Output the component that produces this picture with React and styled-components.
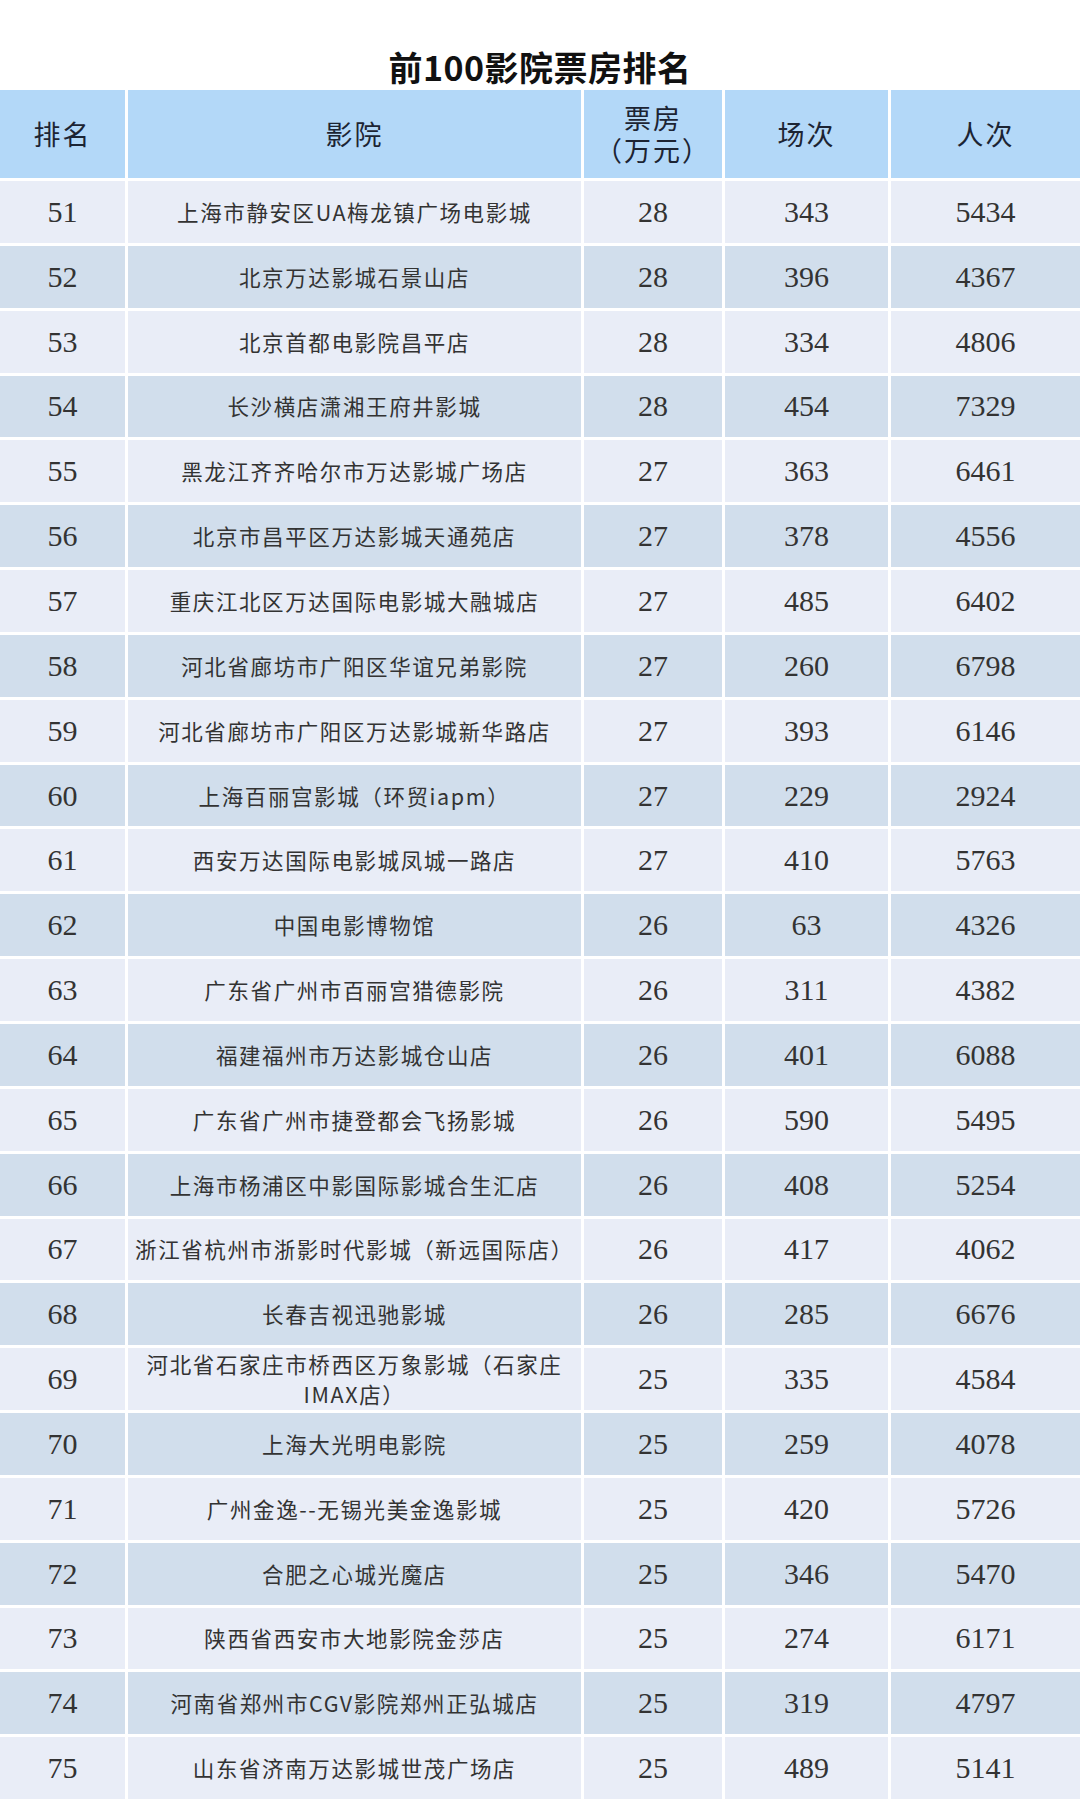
import React from 'react';
import styled, { createGlobalStyle } from 'styled-components';

const GlobalStyle = createGlobalStyle`
  html, body {
    margin: 0;
    padding: 0;
    background: #ffffff;
  }
  body {
    font-family: 'Noto Sans CJK SC', 'Noto Sans', sans-serif;
  }
`;

const Page = styled.div`
  width: 1080px;
  height: 1800px;
  overflow: hidden;
  background: #ffffff;
`;

const Title = styled.h1`
  margin: 0;
  padding-top: 44px;
  height: 46px;
  line-height: 46px;
  text-align: center;
  font-family: 'Noto Sans CJK SC', sans-serif;
  font-weight: 700;
  font-size: 34px;
  letter-spacing: 0.5px;
  color: #111111;
`;

const Table = styled.div`
  display: grid;
  grid-template-columns: 125px 453px 138px 163px 189px;
  grid-template-rows: 88px;
  grid-auto-rows: 61.85px;
  gap: 3px;
  background: #ffffff;
`;

const HeaderCell = styled.div`
  display: flex;
  align-items: center;
  justify-content: center;
  text-align: center;
  background: #b3d8f8;
  color: #1c2433;
  font-family: 'Noto Sans CJK SC', sans-serif;
  font-size: 27px;
  line-height: 32px;
  letter-spacing: 2px;
  white-space: pre;
`;

const Cell = styled.div`
  display: flex;
  align-items: center;
  justify-content: center;
  text-align: center;
  background: ${(p) => (p.$even ? '#d1deec' : '#e9edf7')};
  color: #333333;
  font-family: ${(p) =>
    p.$num
      ? "'Liberation Serif', 'Noto Sans CJK SC', serif"
      : "'Noto Sans CJK SC', 'Liberation Serif', sans-serif"};
  font-size: ${(p) => (p.$num ? '30px' : '21.5px')};
  letter-spacing: ${(p) => (p.$num ? '0' : '1.6px')};
  line-height: 30px;
  white-space: pre;
`;

const rows = [
  [51, '上海市静安区UA梅龙镇广场电影城', 28, 343, 5434],
  [52, '北京万达影城石景山店', 28, 396, 4367],
  [53, '北京首都电影院昌平店', 28, 334, 4806],
  [54, '长沙横店潇湘王府井影城', 28, 454, 7329],
  [55, '黑龙江齐齐哈尔市万达影城广场店', 27, 363, 6461],
  [56, '北京市昌平区万达影城天通苑店', 27, 378, 4556],
  [57, '重庆江北区万达国际电影城大融城店', 27, 485, 6402],
  [58, '河北省廊坊市广阳区华谊兄弟影院', 27, 260, 6798],
  [59, '河北省廊坊市广阳区万达影城新华路店', 27, 393, 6146],
  [60, '上海百丽宫影城（环贸iapm）', 27, 229, 2924],
  [61, '西安万达国际电影城凤城一路店', 27, 410, 5763],
  [62, '中国电影博物馆', 26, 63, 4326],
  [63, '广东省广州市百丽宫猎德影院', 26, 311, 4382],
  [64, '福建福州市万达影城仓山店', 26, 401, 6088],
  [65, '广东省广州市捷登都会飞扬影城', 26, 590, 5495],
  [66, '上海市杨浦区中影国际影城合生汇店', 26, 408, 5254],
  [67, '浙江省杭州市浙影时代影城（新远国际店）', 26, 417, 4062],
  [68, '长春吉视迅驰影城', 26, 285, 6676],
  [69, '河北省石家庄市桥西区万象影城（石家庄\nIMAX店）', 25, 335, 4584],
  [70, '上海大光明电影院', 25, 259, 4078],
  [71, '广州金逸--无锡光美金逸影城', 25, 420, 5726],
  [72, '合肥之心城光魔店', 25, 346, 5470],
  [73, '陕西省西安市大地影院金莎店', 25, 274, 6171],
  [74, '河南省郑州市CGV影院郑州正弘城店', 25, 319, 4797],
  [75, '山东省济南万达影城世茂广场店', 25, 489, 5141],
];

const headers = ['排名', '影院', '票房\n（万元）', '场次', '人次'];

export default function App() {
  return (
    <Page>
      <GlobalStyle />
      <Title>前100影院票房排名</Title>
      <Table>
        {headers.map((h) => (
          <HeaderCell key={h}>{h}</HeaderCell>
        ))}
        {rows.map(([rank, name, box, shows, people], i) => {
          const even = i % 2 === 1;
          return (
            <React.Fragment key={rank}>
              <Cell $num $even={even}>{rank}</Cell>
              <Cell $even={even}>{name}</Cell>
              <Cell $num $even={even}>{box}</Cell>
              <Cell $num $even={even}>{shows}</Cell>
              <Cell $num $even={even}>{people}</Cell>
            </React.Fragment>
          );
        })}
      </Table>
    </Page>
  );
}
